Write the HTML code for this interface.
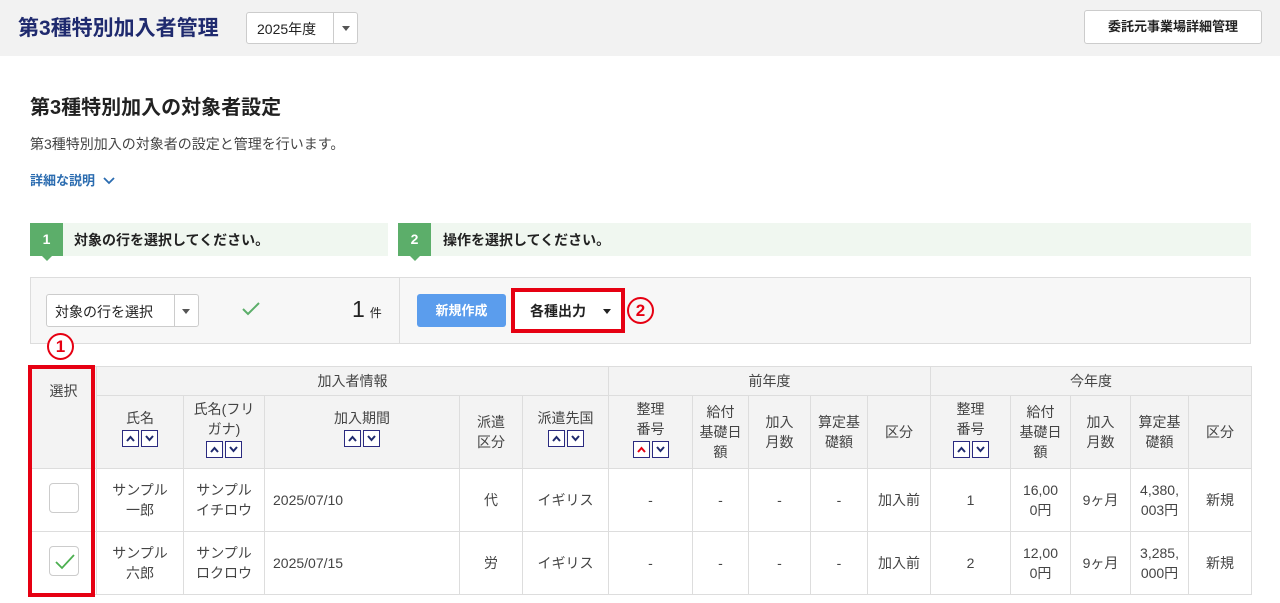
<!DOCTYPE html>
<html><head><meta charset="utf-8"><style>
*{box-sizing:border-box;margin:0;padding:0}
body{width:1280px;height:603px;overflow:hidden;background:#fff;font-family:"Liberation Sans","Noto Sans CJK JP",sans-serif;color:#333;position:relative}
.a{position:absolute}
.top{left:0;top:0;width:1280px;height:56px;background:#f2f2f2}
.sel{border:1px solid #ccc;border-radius:3px;background:#fff}
.caret{width:0;height:0;border-left:4px solid transparent;border-right:4px solid transparent;border-top:5px solid #555;position:absolute}
table{border-collapse:collapse;table-layout:fixed;position:absolute;left:30px;top:366px;font-size:14px;color:#444}
td{border:1px solid #ddd;text-align:center;vertical-align:middle;line-height:20px;padding:0}
thead td{background:#f3f3f3}
.sb{display:inline-block;width:17px;height:17px;border:1px solid #2a2a80;margin:2px 1px 0;position:relative;vertical-align:top;background:#fff}
.sb svg{position:absolute;left:2px;top:2px}
.cb{display:inline-block;width:30px;height:30px;border:1px solid #ccc;border-radius:4px;background:#fff;position:relative}
.circ{width:27px;height:27px;border:2px solid #e60012;border-radius:50%;color:#e60012;font-weight:bold;font-size:17px;text-align:center;line-height:23px}
</style></head><body>
<div class="a top"></div>
<div class="a" style="left:18px;top:12px;font-size:21px;font-weight:bold;color:#1f2a6e">第3種特別加入者管理</div>
<div class="a sel" style="left:246px;top:12px;width:112px;height:32px"><span class="a" style="left:10px;top:6px;font-size:14px;color:#222">2025年度</span><div class="a" style="left:86px;top:0;width:1px;height:30px;background:#ccc"></div><div class="caret" style="left:95px;top:13px"></div></div>
<div class="a sel" style="left:1084px;top:10px;width:178px;height:34px;font-size:13px;font-weight:bold;color:#222;text-align:center;line-height:32px">委託元事業場詳細管理</div>
<div class="a" style="left:30px;top:91px;font-size:20px;font-weight:bold;color:#222">第3種特別加入の対象者設定</div>
<div class="a" style="left:30px;top:134px;font-size:14px;color:#444">第3種特別加入の対象者の設定と管理を行います。</div>
<div class="a" style="left:30px;top:170px;font-size:13px;font-weight:bold;color:#2b6cb0">詳細な説明 <svg width="12" height="8" style="margin-left:4px"><path d="M1 1l5 5 5-5" stroke="#2b6cb0" stroke-width="1.8" fill="none"/></svg></div>

<div class="a" style="left:30px;top:223px;width:358px;height:33px;background:#f0f7f0"></div>
<div class="a" style="left:30px;top:223px;width:33px;height:33px;background:#5cae6a;color:#fff;font-weight:bold;font-size:14px;text-align:center;line-height:33px">1</div>
<div class="a" style="left:42px;top:256px;border-left:5px solid transparent;border-right:5px solid transparent;border-top:5px solid #5cae6a"></div>
<div class="a" style="left:74px;top:230px;font-size:14px;font-weight:bold;color:#222">対象の行を選択してください。</div>
<div class="a" style="left:398px;top:223px;width:853px;height:33px;background:#f0f7f0"></div>
<div class="a" style="left:398px;top:223px;width:33px;height:33px;background:#5cae6a;color:#fff;font-weight:bold;font-size:14px;text-align:center;line-height:33px">2</div>
<div class="a" style="left:410px;top:256px;border-left:5px solid transparent;border-right:5px solid transparent;border-top:5px solid #5cae6a"></div>
<div class="a" style="left:443px;top:230px;font-size:14px;font-weight:bold;color:#222">操作を選択してください。</div>

<div class="a" style="left:30px;top:277px;width:1221px;height:67px;background:#f7f7f7;border:1px solid #ddd"></div>
<div class="a" style="left:399px;top:278px;width:1px;height:65px;background:#ddd"></div>
<div class="a sel" style="left:46px;top:294px;width:153px;height:33px"><span class="a" style="left:8px;top:7px;font-size:14px;color:#222">対象の行を選択</span><div class="a" style="left:127px;top:0;width:1px;height:31px;background:#ccc"></div><div class="caret" style="left:135px;top:14px"></div></div>
<svg class="a" style="left:242px;top:302px" width="18" height="14"><path d="M1 7l5 5 11-11" stroke="#5cae6a" stroke-width="2" fill="none"/></svg>
<div class="a" style="left:352px;top:296px;font-size:23px;color:#222">1<span style="font-size:12px;margin-left:5px">件</span></div>
<div class="a" style="left:417px;top:294px;width:89px;height:33px;background:#5b9ded;border-radius:3px;color:#fff;font-size:13px;font-weight:bold;text-align:center;line-height:33px">新規作成</div>
<div class="a" style="left:511px;top:288px;width:114px;height:45px;border:4px solid #e60012;background:#fff"></div>
<div class="a" style="left:530px;top:301px;font-size:14px;font-weight:bold;color:#222">各種出力</div>
<div class="caret" style="left:603px;top:309px;border-top-color:#222"></div>
<div class="a circ" style="left:627px;top:297px">2</div>
<div class="a circ" style="left:47px;top:333px;background:#fff">1</div>

<table>
<colgroup><col style="width:66px"><col style="width:87px"><col style="width:81px"><col style="width:195px"><col style="width:63px"><col style="width:86px"><col style="width:84px"><col style="width:56px"><col style="width:62px"><col style="width:57px"><col style="width:63px"><col style="width:80px"><col style="width:60px"><col style="width:60px"><col style="width:58px"><col style="width:63px"></colgroup>
<thead>
<tr style="height:29px"><td rowspan="2" style="vertical-align:top;padding-top:14px">選択</td><td colspan="5">加入者情報</td><td colspan="5">前年度</td><td colspan="5">今年度</td></tr>
<tr style="height:73px">
<td style="vertical-align:top;padding-top:12px">氏名<br><span class="sb"><svg width="11" height="11"><path d="M2 8l3.5-4 3.5 4" stroke="#1f2a6e" stroke-width="2" fill="none"/></svg></span><span class="sb"><svg width="11" height="11"><path d="M2 3l3.5 4 3.5-4" stroke="#1f2a6e" stroke-width="2" fill="none"/></svg></span></td>
<td style="vertical-align:top;padding-top:3px">氏名(フリ<br>ガナ)<br><span class="sb"><svg width="11" height="11"><path d="M2 8l3.5-4 3.5 4" stroke="#1f2a6e" stroke-width="2" fill="none"/></svg></span><span class="sb"><svg width="11" height="11"><path d="M2 3l3.5 4 3.5-4" stroke="#1f2a6e" stroke-width="2" fill="none"/></svg></span></td>
<td style="vertical-align:top;padding-top:12px">加入期間<br><span class="sb"><svg width="11" height="11"><path d="M2 8l3.5-4 3.5 4" stroke="#1f2a6e" stroke-width="2" fill="none"/></svg></span><span class="sb"><svg width="11" height="11"><path d="M2 3l3.5 4 3.5-4" stroke="#1f2a6e" stroke-width="2" fill="none"/></svg></span></td>
<td>派遣<br>区分</td>
<td style="vertical-align:top;padding-top:12px">派遣先国<br><span class="sb"><svg width="11" height="11"><path d="M2 8l3.5-4 3.5 4" stroke="#1f2a6e" stroke-width="2" fill="none"/></svg></span><span class="sb"><svg width="11" height="11"><path d="M2 3l3.5 4 3.5-4" stroke="#1f2a6e" stroke-width="2" fill="none"/></svg></span></td>
<td style="vertical-align:top;padding-top:3px">整理<br>番号<br><span class="sb"><svg width="11" height="11"><path d="M2 8l3.5-4 3.5 4" stroke="#e60012" stroke-width="2" fill="none"/></svg></span><span class="sb"><svg width="11" height="11"><path d="M2 3l3.5 4 3.5-4" stroke="#1f2a6e" stroke-width="2" fill="none"/></svg></span></td>
<td>給付<br>基礎日<br>額</td><td>加入<br>月数</td><td>算定基<br>礎額</td><td>区分</td>
<td style="vertical-align:top;padding-top:3px">整理<br>番号<br><span class="sb"><svg width="11" height="11"><path d="M2 8l3.5-4 3.5 4" stroke="#1f2a6e" stroke-width="2" fill="none"/></svg></span><span class="sb"><svg width="11" height="11"><path d="M2 3l3.5 4 3.5-4" stroke="#1f2a6e" stroke-width="2" fill="none"/></svg></span></td>
<td>給付<br>基礎日<br>額</td><td>加入<br>月数</td><td>算定基<br>礎額</td><td>区分</td></tr>
</thead>
<tbody>
<tr style="height:63px"><td><span class="cb"></span></td><td>サンプル<br>一郎</td><td>サンプル<br>イチロウ</td><td style="text-align:left;padding-left:8px">2025/07/10</td><td>代</td><td>イギリス</td><td>-</td><td>-</td><td>-</td><td>-</td><td>加入前</td><td>1</td><td>16,00<br>0円</td><td>9ヶ月</td><td>4,380,<br>003円</td><td>新規</td></tr>
<tr style="height:63px"><td><span class="cb"><svg style="position:absolute;left:4px;top:6px" width="22" height="18"><path d="M2 9l6 6 12-13" stroke="#4caf50" stroke-width="1.8" fill="none"/></svg></span></td><td>サンプル<br>六郎</td><td>サンプル<br>ロクロウ</td><td style="text-align:left;padding-left:8px">2025/07/15</td><td>労</td><td>イギリス</td><td>-</td><td>-</td><td>-</td><td>-</td><td>加入前</td><td>2</td><td>12,00<br>0円</td><td>9ヶ月</td><td>3,285,<br>000円</td><td>新規</td></tr>
</tbody></table>
<div class="a" style="left:28px;top:365px;width:67px;height:232px;border:4px solid #e60012"></div>
</body></html>
